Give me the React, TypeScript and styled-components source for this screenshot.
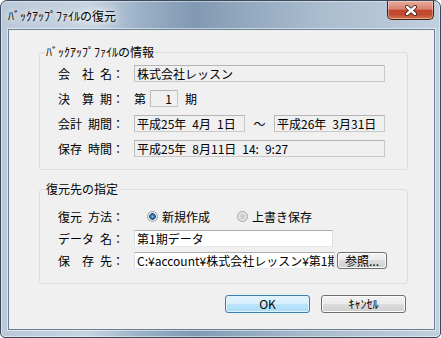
import styled, { createGlobalStyle } from "styled-components";

const GlobalStyle = createGlobalStyle`
  html, body {
    margin: 0;
    padding: 0;
    background: #ffffff;
  }
  body {
    font-family: "Noto Sans CJK JP", "Noto Sans", sans-serif;
    font-size: 12px;
    color: #000;
  }
  * {
    box-sizing: border-box;
  }
`;

const Window = styled.div`
  width: 441px;
  height: 338px;
  border: 1px solid #3b4b5c;
  border-radius: 7px 7px 5px 5px;
  background: linear-gradient(
    to right,
    #b9c9d9 0%,
    #c6d4e1 20%,
    #9ab0c6 32%,
    #8199b2 44%,
    #93a9bf 56%,
    #a9bcce 72%,
    #b6c6d6 88%,
    #c3d1de 100%
  );
  box-shadow: inset 0 0 0 1px rgba(255, 255, 255, 0.45);
  display: flex;
  flex-direction: column;
  overflow: hidden;
`;

const TitleBar = styled.div`
  height: 28px;
  display: flex;
  align-items: center;
  padding-left: 7px;
`;

const TitleText = styled.span`
  flex: 1;
  line-height: 14px;
  padding-top: 2px;
  white-space: pre;
  text-shadow: 0 0 5px #fff, 0 0 9px rgba(255, 255, 255, 0.9),
    0 0 14px rgba(255, 255, 255, 0.8);
`;

const CloseButton = styled.div`
  align-self: flex-start;
  width: 47px;
  height: 19px;
  margin-right: 6px;
  border: 1px solid #47231c;
  border-top: none;
  border-radius: 0 0 5px 5px;
  background: linear-gradient(
    #e9ab9d 0%,
    #d88270 45%,
    #c4452b 52%,
    #c04a30 75%,
    #d7784f 100%
  );
  box-shadow: inset 0 0 0 1px rgba(255, 255, 255, 0.35);
  display: flex;
  align-items: center;
  justify-content: center;
`;

const Frame = styled.div`
  flex: 1;
  display: flex;
  padding: 0 7px 7px;
`;

const Client = styled.div`
  flex: 1;
  display: flex;
  flex-direction: column;
  border: 1px solid #6c8096;
  box-shadow: 0 0 0 1px rgba(255, 255, 255, 0.5);
  background: #f0f0f0;
  padding: 15px 26px 14px 30px;
`;

const GroupBox = styled.fieldset<{ $mt?: number }>`
  margin: ${(p) => p.$mt || 0}px 0 0;
  padding: 0;
  min-inline-size: auto;
  border: 1px solid #d5dfe5;
  border-radius: 3px;
`;

const GroupTitle = styled.legend`
  margin-left: 5px;
  padding: 0 1px;
  line-height: 14px;
  white-space: pre;
`;

const GroupBody = styled.div<{ $gap: number; $pt: number; $pb: number }>`
  display: flex;
  flex-direction: column;
  gap: ${(p) => p.$gap}px;
  padding: ${(p) => p.$pt}px 20px ${(p) => p.$pb}px 18px;
`;

const Row = styled.div`
  display: flex;
  align-items: center;
  height: 17px;
`;

const Label = styled.span`
  width: 76px;
  flex-shrink: 0;
  white-space: pre;
  line-height: 14px;
`;

const ReadField = styled.div<{ $w: number; $right?: boolean }>`
  width: ${(p) => p.$w}px;
  height: 17px;
  flex-shrink: 0;
  border: 1px solid #c9c9c9;
  border-top-color: #b4b4b4;
  border-left-color: #bdbdbd;
  background: #f0f0f0;
  padding: 0 ${(p) => (p.$right ? 5 : 2)}px 0 2px;
  text-align: ${(p) => (p.$right ? "right" : "left")};
  line-height: 15px;
  white-space: pre;
  overflow: hidden;
`;

const EditField = styled.div<{ $w: number }>`
  width: ${(p) => p.$w}px;
  height: 17px;
  flex-shrink: 0;
  border: 1px solid #dbdfe6;
  border-top-color: #abadb3;
  border-bottom-color: #e3e9ef;
  background: #ffffff;
  padding: 0 2px;
  line-height: 15px;
  white-space: pre;
  overflow: hidden;
`;

const Unit = styled.span<{ $ml: number; $mr?: number }>`
  margin-left: ${(p) => p.$ml}px;
  margin-right: ${(p) => p.$mr || 0}px;
  line-height: 14px;
`;

const Tilde = styled.span`
  width: 29px;
  text-align: center;
  line-height: 14px;
`;

const RadioGroup = styled.div`
  display: flex;
  align-items: center;
  gap: 27px;
  padding-left: 13px;
`;

const RadioOption = styled.span`
  display: inline-flex;
  align-items: center;
  gap: 4px;
  line-height: 14px;
`;

const RadioMark = styled.span<{ $checked?: boolean }>`
  width: 11px;
  height: 11px;
  border-radius: 50%;
  border: 1px solid #a2a2a2;
  background: ${(p) =>
    p.$checked
      ? "radial-gradient(circle, #8cc4ee 0, #3b7cb4 1.5px, #1d4f80 3px, #e6e6e6 3.6px, #f8f8f8 100%)"
      : "radial-gradient(circle, #c4c4c4 0, #d8d8d8 2.5px, #ededed 4.5px)"};
`;

const Button = styled.div<{ $w: number; $h: number; $default?: boolean }>`
  width: ${(p) => p.$w}px;
  height: ${(p) => p.$h}px;
  flex-shrink: 0;
  border: 1px solid ${(p) => (p.$default ? "#3c7fb1" : "#707070")};
  border-radius: 3px;
  background: ${(p) =>
    p.$default
      ? "linear-gradient(#e5f4fc 0%, #d4eefb 50%, #bde5fb 50%, #a9daf5 100%)"
      : "linear-gradient(#f2f2f2 0%, #ebebeb 50%, #dddddd 50%, #cfcfcf 100%)"};
  box-shadow: inset 0 0 0 1px ${(p) => (p.$default ? "#dff3fd" : "#fcfcfc")};
  display: flex;
  align-items: center;
  justify-content: center;
  line-height: 14px;
  white-space: pre;
`;

const BrowseButton = styled(Button)`
  margin-left: 2px;
`;

const ButtonBar = styled.div`
  display: flex;
  justify-content: flex-end;
  gap: 11px;
  margin-top: 11px;
  padding-right: 2px;
`;

const CloseIcon = () => (
  <svg width="14" height="11" viewBox="0 0 14 11">
    <path d="M3 2 L11 9 M11 2 L3 9" stroke="#3a1a14" strokeWidth="4" strokeLinecap="round" />
    <path d="M3 2 L11 9 M11 2 L3 9" stroke="#ffffff" strokeWidth="2.4" strokeLinecap="round" />
  </svg>
);

const App = () => {
  return (
    <>
      <GlobalStyle />
      <Window>
        <TitleBar>
          <TitleText>ﾊﾞｯｸｱｯﾌﾟﾌｧｲﾙの復元</TitleText>
          <CloseButton>
            <CloseIcon />
          </CloseButton>
        </TitleBar>
        <Frame>
          <Client>
            <GroupBox>
              <GroupTitle>ﾊﾞｯｸｱｯﾌﾟﾌｧｲﾙの情報</GroupTitle>
              <GroupBody $gap={8} $pt={6} $pb={12}>
                <Row>
                  <Label>{"会\u3000社\u2002名："}</Label>
                  <ReadField $w={251}>株式会社レッスン</ReadField>
                </Row>
                <Row>
                  <Label>{"決\u3000算\u2002期："}</Label>
                  <Unit $ml={0} $mr={4}>第</Unit>
                  <ReadField $w={28} $right>1</ReadField>
                  <Unit $ml={7}>期</Unit>
                </Row>
                <Row>
                  <Label>{"会計\u2002期間："}</Label>
                  <ReadField $w={111}>{"平成25年\u20024月\u20021日"}</ReadField>
                  <Tilde>～</Tilde>
                  <ReadField $w={111}>{"平成26年\u20023月31日"}</ReadField>
                </Row>
                <Row>
                  <Label>{"保存\u2002時間："}</Label>
                  <ReadField $w={251}>{"平成25年\u20028月11日\u200214:\u20029:27"}</ReadField>
                </Row>
              </GroupBody>
            </GroupBox>

            <GroupBox $mt={12}>
              <GroupTitle>復元先の指定</GroupTitle>
              <GroupBody $gap={5} $pt={12} $pb={14}>
                <Row>
                  <Label>{"復元\u2002方法："}</Label>
                  <RadioGroup>
                    <RadioOption>
                      <RadioMark $checked />
                      新規作成
                    </RadioOption>
                    <RadioOption>
                      <RadioMark />
                      上書き保存
                    </RadioOption>
                  </RadioGroup>
                </Row>
                <Row>
                  <Label>{"データ\u2002名："}</Label>
                  <EditField $w={199}>第1期データ</EditField>
                </Row>
                <Row>
                  <Label>{"保\u3000存\u2002先："}</Label>
                  <EditField $w={201}>C:¥account¥株式会社レッスン¥第1期データ</EditField>
                  <BrowseButton $w={50} $h={17}>参照...</BrowseButton>
                </Row>
              </GroupBody>
            </GroupBox>

            <ButtonBar>
              <Button $w={85} $h={18} $default>OK</Button>
              <Button $w={85} $h={18}>ｷｬﾝｾﾙ</Button>
            </ButtonBar>
          </Client>
        </Frame>
      </Window>
    </>
  );
};

export default App;
